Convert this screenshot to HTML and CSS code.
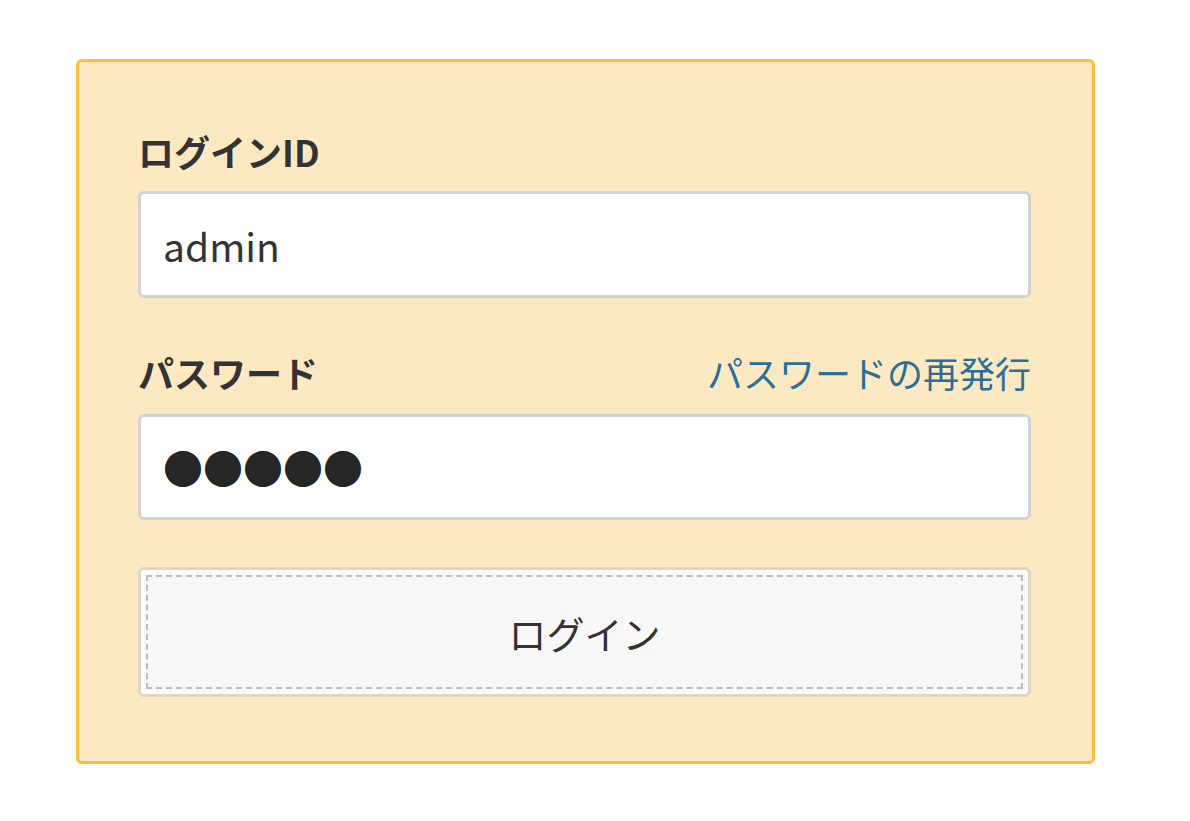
FILE: index.html
```html
<!DOCTYPE html>
<html lang="ja">
<head>
    <meta charset="UTF-8">
    <meta name="viewport" content="width=device-width, initial-scale=1.0">
    <title>ログイン</title>
    <link rel="stylesheet" href="styles.css">
</head>
<body>
    <!-- Login Box -->
    <main class="login-box">
        <form class="login-form" onsubmit="return false;">
            <!-- Login ID -->
            <div class="field-head">
                <label for="loginId">ログインID</label>
            </div>
            <input class="text-input" type="text" id="loginId" name="loginId" value="admin">

            <!-- Password -->
            <div class="field-head field-head-second">
                <label for="password">パスワード</label>
                <a href="#" class="reissue-link">パスワードの再発行</a>
            </div>
            <input class="text-input password-input" type="text" id="password" name="password" value="●●●●●">

            <!-- Submit -->
            <button type="submit" class="login-button">ログイン</button>
        </form>
    </main>
</body>
</html>
```

FILE: styles.css
```css
/* General Reset */
* {
    margin: 0;
    padding: 0;
    box-sizing: border-box;
}

body {
    font-family: "Noto Sans CJK JP", "Noto Sans", sans-serif;
    background-color: #fff;
    color: #333;
    padding: 59px 95px 0 76px;
}

/* Login Box */
.login-box {
    width: 1019px;
    background-color: #fde9c1;
    border: 3px solid #fbbd3b;
    border-radius: 6px;
    padding: 62px 61px 64px 59px;
}

.login-form {
    display: flex;
    flex-direction: column;
}

.field-head {
    display: flex;
    justify-content: space-between;
    align-items: center;
    font-size: 36px;
    line-height: 54px;
    margin-bottom: 13px;
}

.field-head-second {
    margin-top: 47px;
    margin-bottom: 15px;
}

.field-head label {
    font-weight: bold;
    color: #333;
}

.reissue-link {
    color: #2b6f96;
    text-decoration: none;
}

.reissue-link:hover {
    text-decoration: underline;
}

/* Inputs */
.text-input {
    width: 100%;
    height: 107px;
    border: 3px solid #d2d2d2;
    border-radius: 6px;
    background: #fff;
    padding: 0 22px;
    font-family: "Noto Sans CJK JP", "Noto Sans", sans-serif;
    font-size: 39px;
    color: #333;
    outline: none;
}

.password-input {
    height: 106px;
    font-size: 40px;
    color: #262626;
}

/* Button */
.login-button {
    margin-top: 47px;
    height: 130px;
    width: 100%;
    background-color: #f8f8f8;
    border: 3px solid #ddd5c6;
    border-radius: 6px;
    box-shadow: inset 0 0 0 3px #fff;
    outline: 2px dashed #bdbdbd;
    outline-offset: -10px;
    font-family: "Noto Sans CJK JP", "Noto Sans", sans-serif;
    font-size: 38px;
    color: #333;
    cursor: pointer;
}
```
